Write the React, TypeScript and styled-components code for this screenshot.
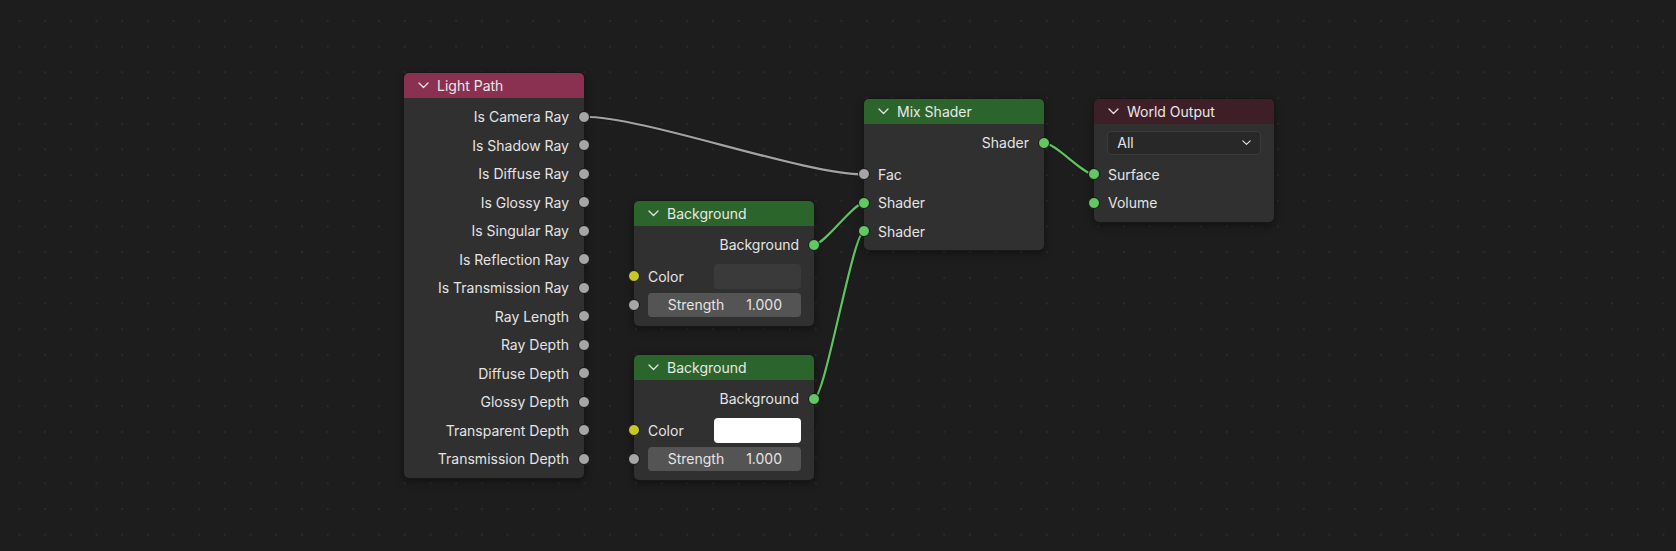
import React from 'react'
import styled, { createGlobalStyle } from 'styled-components'

const GlobalStyle = createGlobalStyle`
  html, body {
    margin: 0;
    padding: 0;
    background: #1d1d1d;
  }
  body {
    font-family: Inter, 'DejaVu Sans', sans-serif;
  }
`

const Canvas = styled.div`
  position: relative;
  width: 1676px;
  height: 551px;
  overflow: hidden;
  background-color: #1d1d1d;
  background-image: radial-gradient(circle, #2a2a2a 1px, transparent 1.4px);
  background-size: 25.7px 25.7px;
  background-position: 6.6px 8.1px;
`

const Wires = styled.svg`
  position: absolute;
  left: 0;
  top: 0;
  width: 100%;
  height: 100%;
`

const NodeBox = styled.div<{ $x: number; $y: number; $pb?: number }>`
  position: absolute;
  left: ${p => p.$x}px;
  top: ${p => p.$y}px;
  width: 180px;
  padding-bottom: ${p => p.$pb ?? 4.5}px;
  background: #303030;
  border-radius: 5px;
  box-shadow: 0 0 0 1px #171717, 0 3px 8px rgba(0, 0, 0, 0.45);
  color: #e4e4e4;
  font-size: 14px;
`

const Header = styled.div<{ $color: string }>`
  height: 25px;
  display: flex;
  align-items: center;
  gap: 8px;
  padding-left: 14px;
  background: ${p => p.$color};
  border-radius: 5px 5px 0 0;
  color: #e8e8e8;
`

const Body = styled.div`
  display: flex;
  flex-direction: column;
  padding-top: 4.5px;
`

const Row = styled.div<{ $out?: boolean }>`
  position: relative;
  height: 28.5px;
  display: flex;
  align-items: center;
  justify-content: ${p => (p.$out ? 'flex-end' : 'flex-start')};
  padding: 0 15px 0 14px;
  white-space: nowrap;
`

const WidgetRow = styled(Row)`
  padding: 0 13px 0 14px;
`

const Spacer = styled.div`
  height: 3.2px;
`

const Socket = styled.span<{ $color: string; $side: 'left' | 'right' }>`
  position: absolute;
  top: 50%;
  ${p => p.$side}: -6px;
  width: 10px;
  height: 10px;
  margin-top: -6px;
  border-radius: 50%;
  background: ${p => p.$color};
  border: 1px solid #151515;
`

const ColorField = styled.div<{ $fill: string }>`
  margin-left: auto;
  width: 87px;
  height: 24.5px;
  border-radius: 4px;
  background: ${p => p.$fill};
`

const Slider = styled.div`
  flex: 1;
  height: 24.5px;
  display: flex;
  align-items: center;
  justify-content: space-between;
  padding: 0 19px 0 20px;
  margin-left: -0.3px;
  border-radius: 4px;
  background: #545454;
`

const Select = styled.div`
  flex: 1;
  height: 24.5px;
  box-sizing: border-box;
  display: flex;
  align-items: center;
  justify-content: space-between;
  padding: 0 9px 0 9px;
  margin-left: -0.7px;
  border-radius: 4px;
  background: #282828;
  border: 1px solid #3b3b3b;
`

const SOCKET = {
  grey: '#a6a6a6',
  green: '#63c763',
  yellow: '#c7c729',
}

const Chevron: React.FC<{ size?: number }> = ({ size = 11 }) => (
  <svg width={size} height={size * 0.6} viewBox="0 0 11 6.6">
    <polyline points="1,1 5.5,5.5 10,1" fill="none" stroke="#e4e4e4" strokeWidth="1.3" strokeLinecap="round" strokeLinejoin="round" />
  </svg>
)

interface Socketed {
  label: string
  color: string
}

const OutputRow: React.FC<Socketed> = ({ label, color }) => (
  <Row $out>
    {label}
    <Socket $color={color} $side="right" />
  </Row>
)

const InputRow: React.FC<Socketed> = ({ label, color }) => (
  <Row>
    <Socket $color={color} $side="left" />
    {label}
  </Row>
)

interface NodeProps {
  title: string
  color: string
  x: number
  y: number
  pb?: number
  children: React.ReactNode
}

const Node: React.FC<NodeProps> = ({ title, color, x, y, pb, children }) => (
  <NodeBox $x={x} $y={y} $pb={pb}>
    <Header $color={color}>
      <Chevron />
      {title}
    </Header>
    <Body>{children}</Body>
  </NodeBox>
)

const BackgroundNode: React.FC<{ y: number; fill: string }> = ({ y, fill }) => (
  <Node title="Background" color="#2b652b" x={634} y={y} pb={6.5}>
    <OutputRow label="Background" color={SOCKET.green} />
    <Spacer />
    <WidgetRow>
      <Socket $color={SOCKET.yellow} $side="left" />
      Color
      <ColorField $fill={fill} />
    </WidgetRow>
    <WidgetRow>
      <Socket $color={SOCKET.grey} $side="left" />
      <Slider>
        <span>Strength</span>
        <span>1.000</span>
      </Slider>
    </WidgetRow>
  </Node>
)

const lightPathOutputs = [
  'Is Camera Ray',
  'Is Shadow Ray',
  'Is Diffuse Ray',
  'Is Glossy Ray',
  'Is Singular Ray',
  'Is Reflection Ray',
  'Is Transmission Ray',
  'Ray Length',
  'Ray Depth',
  'Diffuse Depth',
  'Glossy Depth',
  'Transparent Depth',
  'Transmission Depth',
]

// horizontal handles, short like blender's noodles
function noodle(x1: number, y1: number, x2: number, y2: number): string {
  const h = (x2 - x1) * 0.22
  return `M${x1},${y1} C${x1 + h},${y1} ${x2 - h},${y2} ${x2},${y2}`
}

const links = [
  { d: noodle(584, 116.75, 864, 174.45), color: '#a3a3a3' },
  { d: noodle(814, 244.75, 864, 202.95), color: '#5fc35f' },
  { d: noodle(814, 398.75, 864, 231.45), color: '#5fc35f' },
  { d: noodle(1044, 142.75, 1094, 174.45), color: '#5fc35f' },
]

const App: React.FC = () => (
  <>
    <GlobalStyle />
    <Canvas>
      <Wires>
        {links.map((l, i) => (
          <g key={i}>
            <path d={l.d} fill="none" stroke="#151515" strokeWidth="4" strokeOpacity="0.6" />
            <path d={l.d} fill="none" stroke={l.color} strokeWidth="2.2" />
          </g>
        ))}
      </Wires>

      <Node title="Light Path" color="#8a3050" x={404} y={73}>
        {lightPathOutputs.map(label => (
          <OutputRow key={label} label={label} color={SOCKET.grey} />
        ))}
      </Node>

      <BackgroundNode y={201} fill="#3a3a3a" />
      <BackgroundNode y={355} fill="#ffffff" />

      <Node title="Mix Shader" color="#2b652b" x={864} y={99}>
        <OutputRow label="Shader" color={SOCKET.green} />
        <Spacer />
        <InputRow label="Fac" color={SOCKET.grey} />
        <InputRow label="Shader" color={SOCKET.green} />
        <InputRow label="Shader" color={SOCKET.green} />
      </Node>

      <Node title="World Output" color="#3e1f27" x={1094} y={99}>
        <WidgetRow>
          <Select>
            All
            <Chevron size={9} />
          </Select>
        </WidgetRow>
        <Spacer />
        <InputRow label="Surface" color={SOCKET.green} />
        <InputRow label="Volume" color={SOCKET.green} />
      </Node>
    </Canvas>
  </>
)

export default App
